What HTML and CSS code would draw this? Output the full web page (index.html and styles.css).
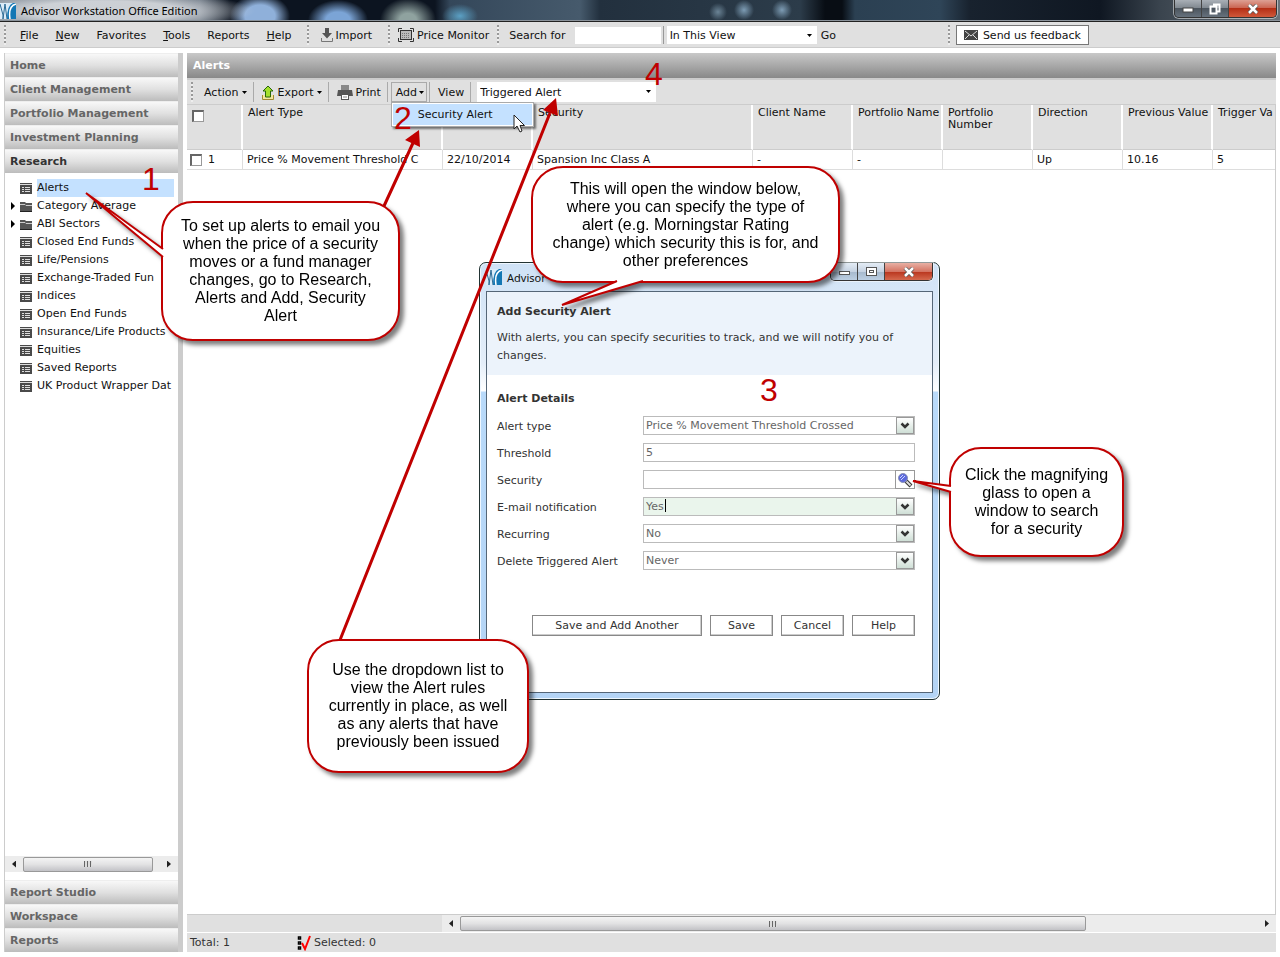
FILE: index.html
```html
<!DOCTYPE html>
<html lang="en">
<head>
    <meta charset="UTF-8">
    <meta name="viewport" content="width=device-width, initial-scale=1.0">
    <title>Advisor Workstation Office Edition</title>
    <link rel="stylesheet" href="styles.css">
</head>
<body>
    <!-- Shared icons -->
    <svg class="defs" width="0" height="0">
        <symbol id="logo" viewBox="0 0 16 16">
            <rect x="0" y="0" width="16" height="16" fill="#dcecf8"/>
            <path d="M7 16Q7 2 13 0H16V16Z" fill="#1377b4"/>
            <path d="M0 1L3 12V16M3 16L5 1L7 16" fill="none" stroke="#2b6a94" stroke-width="1"/>
            <path d="M16 1Q8 3 10 16" fill="none" stroke="#fff" stroke-width="1.500"/>
        </symbol>
        <symbol id="list" viewBox="0 0 12 11">
            <rect width="12" height="11" fill="#4a4a4a"/>
            <path d="M0 1.5H12" stroke="#ddd"/>
            <path d="M2 4.5H4M5 4.5H10M2 6.5H4M5 6.5H10M2 8.5H4M5 8.5H10" stroke="#ddd"/>
        </symbol>
        <symbol id="folder" viewBox="0 0 12 11">
            <path d="M0 1H5L6 2H12V11H0Z" fill="#555"/>
            <path d="M0 3.5H5L6 4.5H12" fill="none" stroke="#ccc"/>
            <path d="M0 10.5H12" stroke="#222"/>
        </symbol>
        <symbol id="down" viewBox="0 0 5 3"><path d="M0 0H5L2.5 3Z" fill="#000"/></symbol>
        <symbol id="chevron" viewBox="0 0 10 8"><path d="M1.500 1.500L5 5L8.500 1.500" fill="none" stroke="#333" stroke-width="2.500"/></symbol>
    </svg>

    <header class="titlebar">
        <svg class="logo"><use href="#logo"/></svg>
        <h1>Advisor Workstation Office Edition</h1>
        <div class="win-controls">
            <button aria-label="Minimize"><svg width="12" height="10"><rect x="1" y="4" width="10" height="4" fill="#fff" stroke="#444"/></svg></button>
            <button aria-label="Restore"><svg width="12" height="12"><path d="M4 1.500H10.500V8.500H8.500M1.500 3.500H7.500V10.500H1.500Z" fill="none" stroke="#fff" stroke-width="2"/></svg></button>
            <button class="close" aria-label="Close"><svg width="12" height="10"><path d="M2 1L10 9M10 1L2 9" stroke="#555" stroke-width="4"/><path d="M2 1L10 9M10 1L2 9" stroke="#fff" stroke-width="2.500"/></svg></button>
        </div>
    </header>

    <nav class="menubar">
        <span class="grip"></span>
        <div class="menus">
            <button><u>F</u>ile</button>
            <button><u>N</u>ew</button>
            <button>Favorites</button>
            <button><u>T</u>ools</button>
            <button>Reports</button>
            <button><u>H</u>elp</button>
        </div>
        <span class="grip"></span>
        <button class="tool">
            <svg width="12" height="14"><path d="M4 0H8V5H11L6 10.500L1 5H4Z" fill="#555"/><path d="M.5 10V13.500H11.500V10" fill="none" stroke="#777"/></svg>
            Import
        </button>
        <span class="grip"></span>
        <button class="tool monitor">
            <svg width="16" height="14"><rect x="2.500" y="2.500" width="11" height="9" fill="#bbb" stroke="#333"/><path d="M4 5.500H12M4 7.500H12M4 9.500H12" stroke="#777" stroke-dasharray="1 1"/><path d="M.5 4V.5H4M12 .5H15.500V4M15.500 10V13.500H12M4 13.500H.5V10" fill="none" stroke="#333"/></svg>
            Price Monitor
        </button>
        <span class="grip"></span>
        <label class="search-label" for="search">Search for</label>
        <input id="search" class="search" type="text">
        <div class="pick scope">
            <select aria-label="Search scope"><option>In This View</option></select>
            <svg><use href="#down"/></svg>
        </div>
        <button class="go">Go</button>
        <span class="grip feedback-grip"></span>
        <button class="feedback">
            <svg width="14" height="10"><rect width="14" height="10" fill="#444"/><path d="M1 1L7 6L13 1M1 9L5 5M13 9L9 5" fill="none" stroke="#ddd"/></svg>
            Send us feedback
        </button>
    </nav>

    <div class="workspace">
        <aside class="sidebar">
            <button class="section">Home</button>
            <button class="section">Client Management</button>
            <button class="section">Portfolio Management</button>
            <button class="section">Investment Planning</button>
            <button class="section active">Research</button>
            <ul class="tree">
                <li class="selected"><svg><use href="#list"/></svg><a href="#">Alerts</a></li>
                <li class="parent"><svg><use href="#folder"/></svg><a href="#">Category Average</a></li>
                <li class="parent"><svg><use href="#folder"/></svg><a href="#">ABI Sectors</a></li>
                <li><svg><use href="#list"/></svg><a href="#">Closed End Funds</a></li>
                <li><svg><use href="#list"/></svg><a href="#">Life/Pensions</a></li>
                <li><svg><use href="#list"/></svg><a href="#">Exchange-Traded Fun</a></li>
                <li><svg><use href="#list"/></svg><a href="#">Indices</a></li>
                <li><svg><use href="#list"/></svg><a href="#">Open End Funds</a></li>
                <li><svg><use href="#list"/></svg><a href="#">Insurance/Life Products</a></li>
                <li><svg><use href="#list"/></svg><a href="#">Equities</a></li>
                <li><svg><use href="#list"/></svg><a href="#">Saved Reports</a></li>
                <li><svg><use href="#list"/></svg><a href="#">UK Product Wrapper Dat</a></li>
            </ul>
            <div class="scrollbar tree-scroll">
                <span class="arrow left"></span>
                <span class="thumb"></span>
                <span class="arrow right"></span>
            </div>
            <button class="section">Report Studio</button>
            <button class="section">Workspace</button>
            <button class="section">Reports</button>
        </aside>

        <main class="panel">
            <h2>Alerts</h2>
            <div class="toolbar">
                <span class="grip"></span>
                <button class="action">Action <svg class="down"><use href="#down"/></svg></button>
                <button>
                    <svg width="13" height="15"><path d="M.5 10V14.500H11.500V10" fill="#f3e7a0" stroke="#a08a30"/><path d="M6 1L11 6H8.500V12H3.500V6H1Z" fill="#a4e02c" stroke="#27660a"/></svg>
                    Export <svg class="down"><use href="#down"/></svg>
                </button>
                <button>
                    <svg width="16" height="15"><path d="M4 0H12V5H4Z" fill="#888"/><path d="M1 5H15L16 11H0Z" fill="#555"/><rect x="4.500" y="9.500" width="7" height="5" fill="#fff" stroke="#555"/><path d="M6 12H10" stroke="#888"/></svg>
                    Print
                </button>
                <div class="add">
                    <button>Add <svg class="down"><use href="#down"/></svg></button>
                    <div class="menu"><button>Security Alert</button></div>
                </div>
                <button>View</button>
                <div class="pick view">
                    <select aria-label="Alert view"><option>Triggered Alert</option></select>
                    <svg><use href="#down"/></svg>
                </div>
            </div>
            <div class="grid">
                <table>
                    <colgroup>
                        <col class="c-check"><col class="c-type"><col class="c-std"><col class="c-security"><col class="c-client">
                        <col class="c-std"><col class="c-std"><col class="c-std"><col class="c-std"><col>
                    </colgroup>
                    <thead>
                        <tr>
                            <th><input type="checkbox" aria-label="Select all"></th>
                            <th>Alert Type</th>
                            <th></th>
                            <th>Security</th>
                            <th>Client Name</th>
                            <th>Portfolio Name</th>
                            <th class="wrap">Portfolio Number</th>
                            <th>Direction</th>
                            <th>Previous Value</th>
                            <th>Trigger Va</th>
                        </tr>
                    </thead>
                    <tbody>
                        <tr>
                            <td><label><input type="checkbox"> 1</label></td>
                            <td>Price % Movement Threshold C</td>
                            <td>22/10/2014</td>
                            <td>Spansion Inc Class A</td>
                            <td>-</td>
                            <td>-</td>
                            <td></td>
                            <td>Up</td>
                            <td>10.16</td>
                            <td>5</td>
                        </tr>
                    </tbody>
                </table>
            </div>
            <div class="grid-scroll">
                <div class="scrollbar">
                    <span class="arrow left"></span>
                    <span class="thumb"></span>
                    <span class="arrow right"></span>
                </div>
            </div>
            <footer class="status">
                <span class="total">Total: 1</span>
                <svg width="14" height="16"><path d="M1.500 2V4H3.500V2ZM1.500 7V9H3.500V7ZM1.500 12V14H3.500V12Z" fill="#fff" stroke="#000" stroke-width="1.500"/><path d="M5 8L8 14L13 1" fill="none" stroke="#f00" stroke-width="2"/></svg>
                <span>Selected: 0</span>
            </footer>
        </main>
    </div>

    <section class="dialog" role="dialog" aria-labelledby="dialog-title">
        <div class="dialog-bar">
            <svg class="logo"><use href="#logo"/></svg>
            <span>Advisor</span>
            <div class="win-controls">
                <button aria-label="Minimize"><svg width="12" height="10"><rect x="1.500" y="4.500" width="10" height="3" fill="#fff" stroke="#555"/></svg></button>
                <button aria-label="Maximize"><svg width="12" height="10"><rect x="1.500" y=".5" width="10" height="8" fill="#fff" stroke="#555"/><rect x="4.500" y="3.500" width="4" height="2" fill="none" stroke="#555"/></svg></button>
                <button class="close" aria-label="Close"><svg width="12" height="10"><path d="M2 1L10 9M10 1L2 9" stroke="#555" stroke-width="4"/><path d="M2 1L10 9M10 1L2 9" stroke="#fff" stroke-width="2.500"/></svg></button>
            </div>
        </div>
        <form class="dialog-body">
            <div class="intro">
                <h3 id="dialog-title">Add Security Alert</h3>
                <p>With alerts, you can specify securities to track, and we will notify you of changes.</p>
            </div>
            <div class="fields">
                <h3>Alert Details</h3>
                <div class="row">
                    <label for="type">Alert type</label>
                    <div class="combo">
                        <select id="type"><option>Price % Movement Threshold Crossed</option></select>
                        <span class="drop"><svg><use href="#chevron"/></svg></span>
                    </div>
                </div>
                <div class="row">
                    <label for="threshold">Threshold</label>
                    <input id="threshold" type="text" value="5">
                </div>
                <div class="row">
                    <label for="security">Security</label>
                    <input id="security" class="lookup" type="text">
                    <button type="button" class="find" aria-label="Find security">
                        <svg width="16" height="16"><path d="M9 9L14 14" stroke="#333" stroke-width="4"/><path d="M9.500 9.500L13.500 13.500" stroke="#ddd" stroke-width="2"/><circle cx="6" cy="6" r="4.500" fill="#5b68dc" stroke="#8d93b5"/><path d="M3 6L6 3M4 8L8 4" stroke="#cdd5ff"/></svg>
                    </button>
                </div>
                <div class="row">
                    <label for="email">E-mail notification</label>
                    <div class="combo focused">
                        <select id="email"><option>Yes</option></select>
                        <span class="caret"></span>
                        <span class="drop"><svg><use href="#chevron"/></svg></span>
                    </div>
                </div>
                <div class="row">
                    <label for="recurring">Recurring</label>
                    <div class="combo">
                        <select id="recurring"><option>No</option></select>
                        <span class="drop"><svg><use href="#chevron"/></svg></span>
                    </div>
                </div>
                <div class="row">
                    <label for="delete">Delete Triggered Alert</label>
                    <div class="combo">
                        <select id="delete"><option>Never</option></select>
                        <span class="drop"><svg><use href="#chevron"/></svg></span>
                    </div>
                </div>
                <div class="buttons">
                    <button type="button" class="wide">Save and Add Another</button>
                    <button type="button">Save</button>
                    <button type="button">Cancel</button>
                    <button type="button">Help</button>
                </div>
            </div>
        </form>
    </section>

    <!-- Help notes over the page -->
    <svg class="arrows">
        <path d="M384 206L413 143M340 640L550 113" stroke="#c00000" stroke-width="3"/>
        <path d="M419 130L420 147L405 140ZM556 98L558 116L543 110Z" fill="#c00000"/>
    </svg>

    <div class="callout note-setup">
        <p>To set up alerts to email you<br>when the price of a security<br>moves or a fund manager<br>changes, go to Research,<br>Alerts and Add, Security<br>Alert</p>
        <svg><path d="M2 48L-75 -8L2 56" fill="#fff" stroke="#c00000" stroke-width="2"/></svg>
    </div>
    <div class="callout note-window">
        <p>This will open the window below,<br>where you can specify the type of<br>alert (e.g. Morningstar Rating<br>change) which security this is for, and<br>other preferences</p>
        <svg><path d="M86 115L31 139L112 115" fill="#fff" stroke="#c00000" stroke-width="2"/></svg>
    </div>
    <div class="callout note-find">
        <p>Click the magnifying<br>glass to open a<br>window to search<br>for a security</p>
        <svg><path d="M2 39L-36 34L2 45" fill="#fff" stroke="#c00000" stroke-width="2"/></svg>
    </div>
    <div class="callout note-view">
        <p>Use the dropdown list to<br>view the Alert rules<br>currently in place, as well<br>as any alerts that have<br>previously been issued</p>
    </div>

    <span class="step step-1">1</span>
    <span class="step step-2">2</span>
    <span class="step step-3">3</span>
    <span class="step step-4">4</span>

    <svg class="pointer" width="13" height="20"><path d="M1 1V15L4 12L7 18L9 17L7 11.500H11.500Z" fill="#fff" stroke="#222"/></svg>
</body>
</html>
```

FILE: styles.css
```css
* {
    margin: 0;
    padding: 0;
    box-sizing: border-box;
}

body {
    position: relative;
    display: flex;
    flex-direction: column;
    min-height: 100vh;
    font-family: "DejaVu Sans", Verdana, sans-serif;
    font-size: 11px;
    color: #111;
    background: #fff;
    overflow-x: hidden;
}

button, input, select {
    font: inherit;
    color: inherit;
    border: none;
    border-radius: 0;
    background: none;
}

.defs {
    position: absolute;
}

.logo {
    width: 16px;
    height: 16px;
    flex: none;
}

/* Window title bar */
.titlebar {
    display: flex;
    align-items: center;
    gap: 5px;
    height: 22px;
    border-bottom: 1px solid #222;
    box-shadow: inset 0 -1px #8a929a;
    background:
        radial-gradient(ellipse 150px 20px at 105px 11px, rgba(215, 218, 222, .9) 50%, transparent),
        radial-gradient(ellipse 30px 22px at 260px 16px, #8fb0da 50%, transparent),
        radial-gradient(ellipse 30px 20px at 338px 20px, #7ba4d6 40%, transparent),
        radial-gradient(ellipse 28px 22px at 408px 20px, #8fa29f 30%, transparent),
        radial-gradient(ellipse 18px 12px at 460px 16px, #5ba0c4, transparent),
        radial-gradient(ellipse 9px 9px at 718px 12px, #6b8496, transparent),
        radial-gradient(ellipse 10px 10px at 744px 10px, #7d9cb4, transparent),
        radial-gradient(ellipse 10px 10px at 782px 10px, #7d9cb4, transparent),
        linear-gradient(90deg, #7d8893 0, #5e6a78 200px, #0c1420 230px, #0c1420 435px, #34475a 450px, #465a6c 580px, #22303e 600px, #2c3c4a 800px, #080d14 825px, #080d14 842px, #2b4052 855px, #2f4558 940px, #18222e 970px, #0f1722 1100px, #3a444e 1160px, #6a737b 1280px);
}

.titlebar h1 {
    font-family: "Noto Sans", "Open Sans", sans-serif;
    font-size: 11px;
    font-weight: normal;
    color: #000;
    white-space: nowrap;
}

.win-controls {
    display: flex;
    align-self: flex-start;
    margin-left: auto;
    margin-right: 3px;
    height: 18px;
    border: 1px solid #333;
    border-top: none;
    border-radius: 0 0 5px 5px;
    box-shadow: 0 0 0 1px rgba(255, 255, 255, .5);
    overflow: hidden;
}

.win-controls button {
    display: flex;
    align-items: center;
    justify-content: center;
    width: 27px;
    border-right: 1px solid #444;
    background: linear-gradient(#a9afb6, #7d858d 50%, #4c555e 50%, #66717c);
}

.win-controls .close {
    width: 47px;
    border-right: none;
    background: linear-gradient(#dda094, #c9604c 50%, #b52f16 50%, #d0583a);
}

/* Menu bar */
.menubar {
    display: flex;
    align-items: center;
    height: 26px;
    padding-top: 1px;
    padding-left: 4px;
    border-bottom: 1px solid #ccc;
    background: #e0e0e0;
    white-space: nowrap;
}

.grip {
    width: 2px;
    height: 20px;
    flex: none;
    background: repeating-linear-gradient(#999 0 2px, #eee 2px 4px);
}

.menus {
    display: flex;
    gap: 17px;
    padding: 0 15px 0 14px;
}

.tool {
    display: flex;
    align-items: center;
    gap: 3px;
    padding: 0 16px 0 12px;
}

.tool.monitor {
    padding: 0 8px;
}

.search-label {
    margin: 0 9px 0 10px;
}

.search {
    width: 86px;
    height: 17px;
    padding: 0 2px;
    background: #fff;
}

.pick {
    position: relative;
    height: 18px;
}

.pick select {
    width: 100%;
    height: 100%;
    padding: 0 3px;
    background: #fff;
    appearance: none;
}

.pick svg {
    position: absolute;
    top: 8px;
    right: 5px;
    width: 5px;
    height: 3px;
}

.scope {
    width: 154px;
    margin-left: 2px;
    padding-left: 3px;
    border-left: 1px solid #999;
}

.go {
    padding: 0 4px;
}

.feedback-grip {
    margin-left: 108px;
    margin-right: 6px;
}

.feedback {
    display: flex;
    align-items: center;
    gap: 5px;
    height: 20px;
    padding: 0 7px;
    border: 1px solid #777;
    background: #fff;
}

/* Work area */
.workspace {
    display: flex;
    flex: 1;
    gap: 4px;
    padding: 5px 4px;
}

.sidebar {
    display: flex;
    flex-direction: column;
    width: 179px;
    flex: none;
    border-left: 1px solid #ccc;
    border-right: 5px solid #ccc;
}

.section {
    height: 24px;
    flex: none;
    padding-left: 5px;
    border-top: 1px solid #eee;
    font-weight: bold;
    color: #666;
    text-align: left;
    background: linear-gradient(#f8f8f8, #e0e0e0 50%, #bcbcbc);
}

.section.active {
    color: #333;
}

.tree {
    flex: 1;
    padding: 6px 4px 0 5px;
    list-style: none;
}

.tree li {
    display: flex;
    align-items: center;
    height: 18px;
    padding-left: 10px;
    white-space: nowrap;
}

.tree li.parent {
    padding-left: 0;
}

.tree li.parent::before {
    content: "";
    width: 10px;
    height: 8px;
    background: #000;
    clip-path: polygon(1px 0, 5px 4px, 1px 8px);
}

.tree svg {
    width: 12px;
    height: 11px;
    flex: none;
}

.tree a {
    flex: 1;
    margin-left: 5px;
    line-height: 18px;
    color: #111;
    text-decoration: none;
}

.tree .selected a {
    background: #c4e1ff;
}

.scrollbar {
    display: flex;
    align-items: center;
    height: 16px;
    background: #ececec;
}

.arrow {
    width: 4px;
    height: 7px;
    margin: 0 7px;
    background: #222;
    flex: none;
}

.arrow.left {
    clip-path: polygon(100% 0, 0 50%, 100% 100%);
}

.arrow.right {
    margin-left: auto;
    clip-path: polygon(0 0, 100% 50%, 0 100%);
}

.thumb {
    display: flex;
    align-items: center;
    justify-content: center;
    width: 75%;
    height: 15px;
    border: 1px solid #999;
    border-radius: 2px;
    background: linear-gradient(#f4f4f4, #e2e2e3 50%, #c2c2c6);
}

.thumb::before {
    content: "";
    width: 8px;
    height: 6px;
    background: repeating-linear-gradient(90deg, #666 0 1px, #ddd 1px 3px);
}

.tree-scroll {
    margin-bottom: 8px;
}

/* Alerts panel */
.panel {
    display: flex;
    flex-direction: column;
    flex: 1;
    min-width: 0;
}

.panel h2 {
    height: 27px;
    padding-left: 6px;
    border-bottom: 2px solid #ccc;
    font-size: 11px;
    line-height: 26px;
    color: #fff;
    background: linear-gradient(#c8c8c8, #898989);
}

.toolbar {
    display: flex;
    align-items: center;
    height: 24px;
    padding-left: 4px;
    background: #e0e0e0;
    white-space: nowrap;
}

.toolbar > button, .add {
    display: flex;
    align-items: center;
    gap: 2px;
    height: 20px;
    padding: 0 6px 0 8px;
    border-right: 1px solid #aaa;
}

.toolbar > .action {
    padding-left: 11px;
}

.toolbar .down {
    width: 5px;
    height: 3px;
    margin-left: 2px;
}

.toolbar > .add {
    position: relative;
    padding: 0 2px 0 3px;
}

.add > button {
    display: flex;
    align-items: center;
    height: 20px;
    padding: 0 2px 0 4px;
    border: 1px solid #aaa;
}

.menu {
    position: absolute;
    top: 20px;
    left: 3px;
    width: 143px;
    padding: 1px;
    border: 1px solid #aaa;
    background: #fff;
    box-shadow: 2px 2px 2px rgba(0, 0, 0, .5);
}

.menu button {
    width: 100%;
    height: 21px;
    padding-left: 25px;
    text-align: left;
    background: #c4e1ff;
}

.view {
    width: 179px;
    height: 20px;
    margin-left: 6px;
}

.grid {
    flex: 1;
    border-top: 1px solid #ccc;
    border-right: 1px solid #ccc;
    overflow: hidden;
}

table {
    width: 100%;
    border-collapse: separate;
    border-spacing: 0;
    table-layout: fixed;
}

.c-check { width: 56px; }
.c-type { width: 200px; }
.c-std { width: 90px; }
.c-security { width: 220px; }
.c-client { width: 100px; }

th, td {
    padding: 0 0 0 4px;
    border-right: 1px solid #ddd;
    font-weight: normal;
    text-align: left;
    white-space: nowrap;
    overflow: hidden;
}

th {
    height: 45px;
    padding-top: 2px;
    padding-left: 5px;
    border-right: 2px solid #fff;
    border-bottom: 1px solid #ccc;
    line-height: 12px;
    vertical-align: top;
    background: #e0e0e0;
}

th.wrap {
    white-space: normal;
}

td {
    height: 20px;
    border-bottom: 1px solid #ddd;
}

th:last-child, td:last-child {
    border-right: none;
}

td label {
    display: flex;
    align-items: center;
    gap: 6px;
}

td:first-child {
    padding-left: 3px;
}

input[type="checkbox"] {
    width: 12px;
    height: 12px;
    border: 1px solid #999;
    border-top: 2px solid #666;
    border-left: 2px solid #666;
    background: #fff;
    appearance: none;
}

th input[type="checkbox"] {
    margin-top: 3px;
}

.grid-scroll {
    height: 19px;
    padding-left: 255px;
    border-top: 1px solid #ccc;
    border-bottom: 1px solid #fff;
    background: #e0e0e0;
}

.grid-scroll .scrollbar {
    height: 17px;
}

.status {
    display: flex;
    align-items: center;
    height: 19px;
    padding-left: 3px;
    color: #333;
    background: #e0e0e0;
}

.status .total {
    width: 107px;
}

.status svg {
    margin-right: 3px;
}

/* Add Security Alert window */
.dialog {
    position: absolute;
    top: 262px;
    left: 479px;
    width: 461px;
    padding: 0 6px 6px;
    border: 1px solid #233;
    border-radius: 7px;
    background: linear-gradient(#cfe2f6, #e4eef9 100px, #fff 128px, #b9dafa 129px, #b4d4f5);
    box-shadow: inset 0 0 0 1px #eef7ff;
}

.dialog-bar {
    display: flex;
    align-items: center;
    gap: 5px;
    height: 28px;
    font-family: "Noto Sans", "Open Sans", sans-serif;
}

.dialog .win-controls {
    margin-right: 0;
}

.dialog .win-controls button {
    background: linear-gradient(#e4ecf5, #c6d3e2 50%, #a6b8cc 50%, #bccfe2);
}

.dialog .win-controls .close {
    background: linear-gradient(#e8b0a4, #d47463 50%, #b8331c 50%, #d5694e);
}

.dialog-body {
    height: 402px;
    border: 1px solid #567;
    background: #fff;
    color: #333;
}

.intro {
    height: 83px;
    padding: 12px 10px;
    background: #ecf3fb;
}

.dialog h3 {
    height: 16px;
    font-size: 11px;
    line-height: 16px;
}

.intro p {
    margin-top: 9px;
    line-height: 18px;
}

.fields {
    padding: 16px 17px 0 10px;
}

.row {
    display: flex;
    align-items: center;
    height: 27px;
}

.fields h3 {
    margin-bottom: 5px;
}

.row label {
    width: 146px;
    padding-top: 2px;
}

.row input, .combo {
    flex: 1;
    min-width: 0;
    height: 19px;
    border: 1px solid #bbb;
    color: #666;
}

.row input {
    padding: 0 2px;
}

.combo {
    position: relative;
}

.combo select {
    width: 100%;
    height: 17px;
    padding: 0 2px;
    appearance: none;
}

.combo.focused {
    background: #eaf5ec;
}

.caret {
    position: absolute;
    top: 1px;
    left: 21px;
    width: 1px;
    height: 13px;
    background: #000;
}

.drop {
    position: absolute;
    top: 0;
    right: 0;
    display: flex;
    align-items: center;
    justify-content: center;
    width: 18px;
    height: 17px;
    border: 1px solid #999;
    background: linear-gradient(#fff, #cfdfd6);
    pointer-events: none;
}

.drop svg {
    width: 10px;
    height: 8px;
}

.row .lookup {
    border-right: none;
}

.find {
    display: flex;
    align-items: center;
    justify-content: center;
    width: 20px;
    height: 19px;
    border: 1px solid #999;
}

.buttons {
    display: flex;
    justify-content: flex-end;
    gap: 8px;
    margin-top: 41px;
}

.buttons button {
    width: 63px;
    height: 21px;
    border: 1px solid #888;
    box-shadow: inset -1px -1px #ccc;
    background: #fff;
}

.buttons .wide {
    width: 170px;
}

/* Notes */
.arrows {
    position: absolute;
    top: 0;
    left: 0;
    width: 100%;
    height: 700px;
    pointer-events: none;
}

.callout {
    position: absolute;
    filter: drop-shadow(4px 4px 2px rgba(0, 0, 0, .5));
}

.callout p {
    display: grid;
    place-content: center;
    width: 100%;
    height: 100%;
    border: 2px solid #c00000;
    border-radius: 32px;
    font-family: "Liberation Sans", Arial, sans-serif;
    font-size: 16px;
    line-height: 18px;
    text-align: center;
    white-space: nowrap;
    color: #000;
    background: #fff;
}

.callout svg {
    position: absolute;
    top: 0;
    left: 0;
    overflow: visible;
    pointer-events: none;
}

.note-setup {
    top: 201px;
    left: 161px;
    width: 239px;
    height: 140px;
}

.note-window {
    top: 166px;
    left: 531px;
    width: 309px;
    height: 117px;
}

.note-find {
    top: 447px;
    left: 949px;
    width: 175px;
    height: 110px;
}

.note-view {
    top: 639px;
    left: 307px;
    width: 222px;
    height: 134px;
}

.step {
    position: absolute;
    font-family: "Liberation Sans", Arial, sans-serif;
    font-size: 32px;
    line-height: 36px;
    color: #c00000;
}

.step-1 { top: 161px; left: 142px; }
.step-2 { top: 100px; left: 394px; }
.step-3 { top: 372px; left: 760px; }
.step-4 { top: 56px; left: 645px; }

.pointer {
    position: absolute;
    top: 114px;
    left: 513px;
}
```
